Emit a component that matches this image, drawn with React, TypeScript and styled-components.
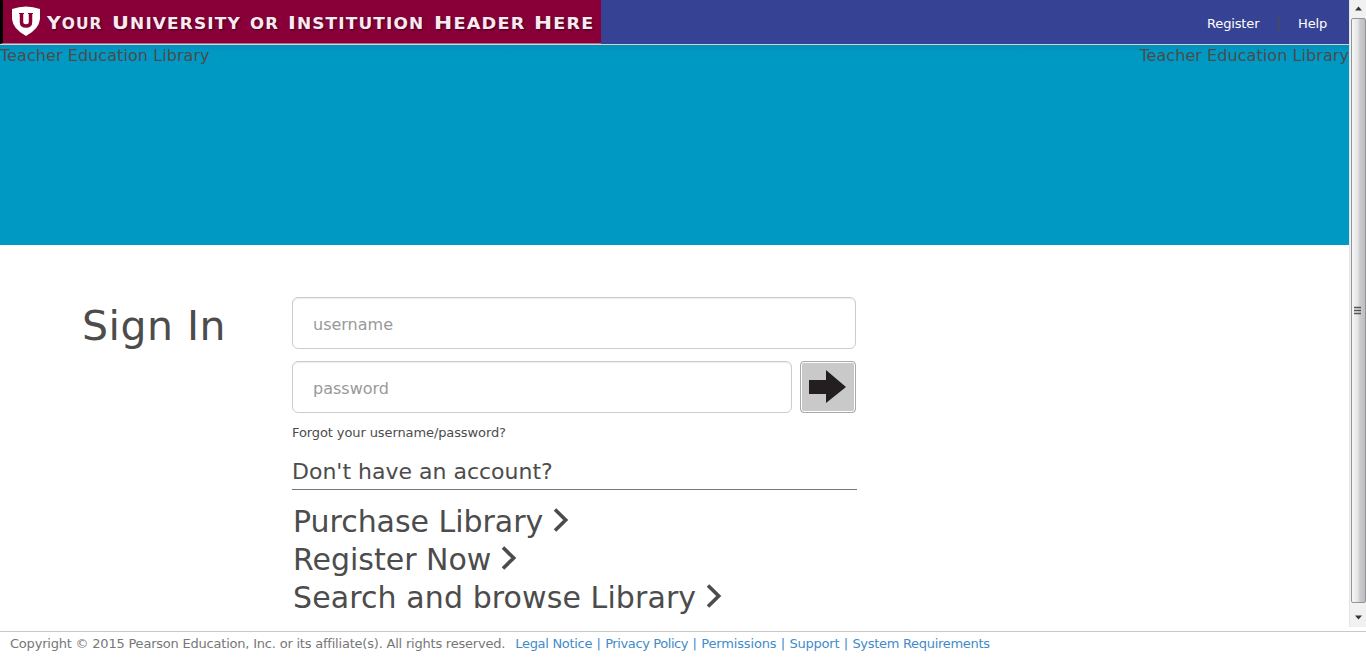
import React from "react";
import styled, { createGlobalStyle } from "styled-components";

const GlobalStyle = createGlobalStyle`
  * { box-sizing: border-box; }
  body {
    margin: 0;
    background: #fff;
    color: #4c4c4c;
    font-family: Verdana, "DejaVu Sans", sans-serif;
    overflow: hidden;
  }
  a { color: inherit; text-decoration: none; }
`;

const Page = styled.div`
  display: flex;
  flex-direction: column;
  height: 657px;
`;

const Viewport = styled.div`
  display: flex;
  height: 631px;
`;

const Content = styled.div`
  width: 1349px;
  flex: none;
`;

const Header = styled.header`
  display: flex;
  justify-content: space-between;
  height: 45px;
  background: #364395;
  border-bottom: 1px solid #d3d3d3;
`;

const Brand = styled.div`
  display: flex;
  align-items: flex-start;
  width: 601px;
  height: 44px;
  padding: 6px 0 0 8px;
  background: #890039;
  border-left: 3px solid #000;
  border-bottom: 1px solid #a8708a;
`;

const BrandWords = styled.div`
  display: flex;
  align-items: baseline;
  margin-left: 6px;
  padding-top: 5px;
`;

const BrandWord = styled.span<{ $width: number; $stretch: number; $capital: boolean }>`
  display: block;
  width: ${(p) => p.$width}px;
  color: #fbe9f1;
  font-size: 15px;
  line-height: 23px;
  font-weight: bold;
  letter-spacing: 1px;
  text-transform: uppercase;
  text-shadow: 1px 1px 2px #3d001c;
  white-space: nowrap;
  transform: scaleX(${(p) => p.$stretch});
  transform-origin: left;
  &::first-letter { font-size: ${(p) => (p.$capital ? 18.5 : 15)}px; }
`;

const TopNav = styled.nav`
  display: flex;
  align-items: center;
  height: 47px;
  padding-right: 22px;
  color: #fff;
  font-size: 13px;
  letter-spacing: -0.15px;
`;

const NavLink = styled.a<{ $width: number }>`
  width: ${(p) => p.$width}px;
  white-space: nowrap;
`;

const Divider = styled.i`
  width: 1px;
  height: 16px;
  margin: 0 19px 0 18px;
  background: #4c4c4c;
`;

const Banner = styled.div`
  display: flex;
  justify-content: space-between;
  height: 200px;
  background: linear-gradient(#0090ba, #0099c4 8px);
  font-size: 16px;
  line-height: 22px;
`;

const Text = styled.span<{ $spacing?: number }>`
  letter-spacing: ${(p) => p.$spacing ?? 0}px;
  white-space: nowrap;
`;

const Main = styled.main`
  display: flex;
  padding: 52px 0 0 82px;
`;

const Title = styled.h1`
  width: 210px;
  margin: 5px 0 0;
  font-size: 41px;
  line-height: 48px;
  font-weight: normal;
`;

const Form = styled.form`
  width: 565px;
`;

const Field = styled.input<{ $width: number }>`
  display: block;
  width: ${(p) => p.$width}px;
  height: 52px;
  padding: 2px 20px 0;
  border: 1px solid #ccc;
  border-radius: 6px;
  outline: none;
  box-shadow: inset 0 1px 1px rgba(0, 0, 0, 0.075);
  font: 16px Verdana, "DejaVu Sans", sans-serif;
  &::placeholder { color: #999; opacity: 1; }
`;

const PasswordRow = styled.div`
  display: flex;
  gap: 8px;
  margin-top: 12px;
`;

const Submit = styled.button`
  width: 56px;
  height: 52px;
  padding: 0;
  border: 1px solid #aaa;
  border-radius: 4px;
  background: #c9c9c9;
  box-shadow: inset 0 0 0 1px #fff;
  svg { display: block; }
`;

const Forgot = styled.a`
  display: block;
  margin-top: 12px;
  font-size: 13px;
  line-height: 16px;
`;

const Question = styled.h2`
  height: 37px;
  margin: 12px 0 12px;
  border-bottom: 1px solid #777;
  font-size: 22px;
  line-height: 37px;
  font-weight: normal;
`;

const ActionLink = styled.a`
  display: flex;
  align-items: center;
  height: 38px;
  padding-left: 1px;
  font-size: 30px;
  svg { margin: -2px 0 0 10px; }
`;

const Scrollbar = styled.div`
  display: flex;
  flex-direction: column;
  align-items: center;
  width: 17px;
  height: 627px;
  padding: 6px 0 7px;
  background: #f1f1f1;
  border-left: 1px solid #e4e4e4;
`;

const Thumb = styled.div`
  display: flex;
  align-items: center;
  justify-content: center;
  width: 15px;
  height: 586px;
  margin: 7px 0 12px;
  border: 1px solid #949494;
  border-radius: 2px;
  background: linear-gradient(90deg, #f6f6f6, #e4e4e6 45%, #cbcbd0 60%, #bcbcc1);
`;

const Footer = styled.footer`
  display: flex;
  height: 26px;
  padding: 3px 10px 0;
  border-top: 1px solid #c8c8c8;
  color: #777;
  font-size: 13px;
  line-height: 18px;
`;

const FooterLinks = styled.div`
  display: flex;
  margin-left: 10px;
  color: #428bca;
`;

const Separator = styled.span`
  width: 13px;
  text-align: center;
`;

const words = [
  { text: "Your", width: 65, stretch: 1.03 },
  { text: "University", width: 138, stretch: 1.13 },
  { text: "or", width: 38, stretch: 1.1 },
  { text: "Institution", width: 146, stretch: 1.13 },
  { text: "Header", width: 100, stretch: 1.18 },
  { text: "Here", width: 60, stretch: 1.17 },
];

const actions = [
  { label: "Purchase Library", spacing: -0.03 },
  { label: "Register Now", spacing: 0 },
  { label: "Search and browse Library", spacing: 0.1 },
];

const links = [
  { label: "Legal Notice", spacing: -0.3 },
  { label: "Privacy Policy", spacing: -0.4 },
  { label: "Permissions", spacing: -0.15 },
  { label: "Support", spacing: -0.2 },
  { label: "System Requirements", spacing: -0.3 },
];

const Shield = () => (
  <svg width="30" height="30" viewBox="0 0 30 30">
    <path d="M1 3Q15-2 29 3V13Q28 23 15 30Q2 23 1 13Z" fill="#fff" />
    <path d="M10.500 7V16Q10.500 20 15 20Q19.500 20 19.500 16V7" fill="none" stroke="#890039" strokeWidth="3.500" />
    <path d="M8 7.500H13M17 7.500H22" stroke="#890039" strokeWidth="1" />
  </svg>
);

const Chevron = () => (
  <svg width="16" height="24" viewBox="0 0 16 24">
    <path d="M2 1.500L12.700 12L2 22.500" fill="none" stroke="#4c4c4c" strokeWidth="3.600" />
  </svg>
);

export default function App() {
  return (
    <Page>
      <GlobalStyle />
      <Viewport>
        <Content>
          <Header>
            <Brand>
              <Shield />
              <BrandWords>
                {words.map((w) => (
                  <BrandWord key={w.text} $width={w.width} $stretch={w.stretch} $capital={w.text !== "or"}>
                    {w.text}
                  </BrandWord>
                ))}
              </BrandWords>
            </Brand>
            <TopNav>
              <NavLink $width={53} href="#register">Register</NavLink>
              <Divider />
              <NavLink $width={29} href="#help">Help</NavLink>
            </TopNav>
          </Header>
          <Banner>
            <Text $spacing={0.07}>Teacher Education Library</Text>
            <Text $spacing={0.07}>Teacher Education Library</Text>
          </Banner>
          <Main>
            <Title><Text $spacing={0.5}>Sign In</Text></Title>
            <Form>
              <Field $width={564} placeholder="username" />
              <PasswordRow>
                <Field $width={500} type="password" placeholder="password" />
                <Submit type="button" aria-label="Sign in">
                  <svg width="54" height="50" viewBox="0 0 54 50">
                    <path d="M8 18H25V8L45 25L25 41V32H8Z" fill="#231f20" />
                  </svg>
                </Submit>
              </PasswordRow>
              <Forgot href="#forgot"><Text $spacing={-0.1}>Forgot your username/password?</Text></Forgot>
              <Question><Text>Don't have an account?</Text></Question>
              {actions.map((a) => (
                <ActionLink key={a.label} href="#action"><Text $spacing={a.spacing}>{a.label}</Text><Chevron /></ActionLink>
              ))}
            </Form>
          </Main>
        </Content>
        <Scrollbar>
          <svg width="7" height="5" viewBox="0 0 7 5"><path d="M0 4.500L3.500 .5L7 4.500Z" fill="#333" /></svg>
          <Thumb>
            <svg width="8" height="9" viewBox="0 0 8 9"><path d="M0 1.500H7M0 4.500H7M0 7.500H7" stroke="#555" strokeWidth="1.500" /></svg>
          </Thumb>
          <svg width="7" height="5" viewBox="0 0 7 5"><path d="M0 .5L3.500 4.500L7 .5Z" fill="#333" /></svg>
        </Scrollbar>
      </Viewport>
      <Footer>
        <Text $spacing={-0.21}>Copyright © 2015 Pearson Education, Inc. or its affiliate(s). All rights reserved.</Text>
        <FooterLinks>
          {links.map((l, i) => (
            <React.Fragment key={l.label}>
              {i > 0 && <Separator>|</Separator>}
              <Text as="a" href="#link" $spacing={l.spacing}>{l.label}</Text>
            </React.Fragment>
          ))}
        </FooterLinks>
      </Footer>
    </Page>
  );
}
